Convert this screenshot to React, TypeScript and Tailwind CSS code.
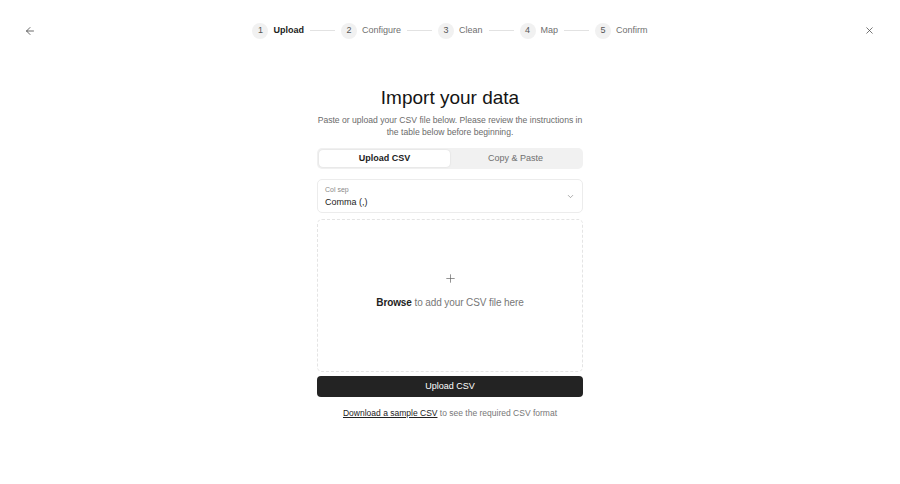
import { ArrowLeft, X, ChevronDown, Plus } from "lucide-react";

const steps = ["Upload", "Configure", "Clean", "Map", "Confirm"];

const App = () => {
  return (
    <div className="min-h-[484px] bg-white text-[#1c1c1c] font-['Liberation_Sans',Arial,sans-serif]">
      {/* Header */}
      <div className="h-[61px] flex items-center justify-between px-[24px]">
        <button className="w-[12px] h-[12px] flex items-center justify-center text-[#444]">
          <ArrowLeft className="w-[12px] h-[12px]" strokeWidth={1.6} />
        </button>

        <div className="flex items-center">
          {steps.map((step, i) => (
            <div key={step} className="flex items-center">
              <div className="flex items-center gap-[5px]">
                <span className="w-[16px] h-[16px] rounded-full bg-[#f1f1f1] flex items-center justify-center text-[9px] text-[#555]">
                  {i + 1}
                </span>
                <span
                  className={
                    i === 0
                      ? "text-[9px] font-bold text-[#222]"
                      : "text-[9px] text-[#6f6f6f]"
                  }
                >
                  {step}
                </span>
              </div>
              {i < steps.length - 1 && (
                <div className="w-[25px] h-px bg-[#e2e2e2] mx-[6px]" />
              )}
            </div>
          ))}
        </div>

        <button className="w-[12px] h-[12px] flex items-center justify-center text-[#444]">
          <X className="w-[11px] h-[11px]" strokeWidth={1.6} />
        </button>
      </div>

      {/* Main */}
      <div className="w-[266px] mx-auto pt-[25px]">
        <h1 className="text-[19px] leading-[24px] text-center text-[#141414]">
          Import your data
        </h1>
        <p className="mt-[4px] text-[8.6px] leading-[12px] text-center text-[#6b6b6b]">
          Paste or upload your CSV file below. Please review the instructions in
          the table below before beginning.
        </p>

        {/* Tabs */}
        <div className="mt-[10px] h-[21px] p-[2px] rounded-[5px] bg-[#f1f1f1] flex">
          <button className="flex-1 rounded-[4px] bg-white shadow-[0_0_2px_rgba(0,0,0,0.12)] text-[9px] font-bold text-[#1c1c1c]">
            Upload CSV
          </button>
          <button className="flex-1 text-[9px] text-[#6f6f6f]">
            Copy &amp; Paste
          </button>
        </div>

        {/* Select */}
        <div className="mt-[10px] h-[34px] border border-[#ececec] rounded-[5px] px-[7px] flex items-center justify-between">
          <div className="flex flex-col">
            <span className="text-[7px] leading-[9px] text-[#8a8a8a]">Col sep</span>
            <span className="mt-[3px] text-[9px] leading-[11px] text-[#1c1c1c]">Comma (,)</span>
          </div>
          <ChevronDown className="w-[9px] h-[9px] text-[#777]" strokeWidth={1.6} />
        </div>

        {/* Dropzone */}
        <div className="mt-[6px] h-[153px] border border-dashed border-[#e4e4e4] rounded-[5px] flex flex-col items-center pt-[52px]">
          <Plus className="w-[13px] h-[13px] text-[#666]" strokeWidth={1.3} />
          <p className="mt-[11px] text-[10px] leading-[14px] tracking-[-0.1px] text-[#777]">
            <span className="font-bold text-[#222]">Browse</span> to add your CSV file here
          </p>
        </div>

        {/* Button */}
        <button className="mt-[3px] w-full h-[21px] rounded-[4px] bg-[#232323] text-white text-[9px]">
          Upload CSV
        </button>

        <p className="mt-[10px] text-[8.5px] leading-[12px] text-center text-[#777]">
          <span className="underline text-[#222]">Download a sample CSV</span> to see the
          required CSV format
        </p>
      </div>
    </div>
  );
};

export default App;
